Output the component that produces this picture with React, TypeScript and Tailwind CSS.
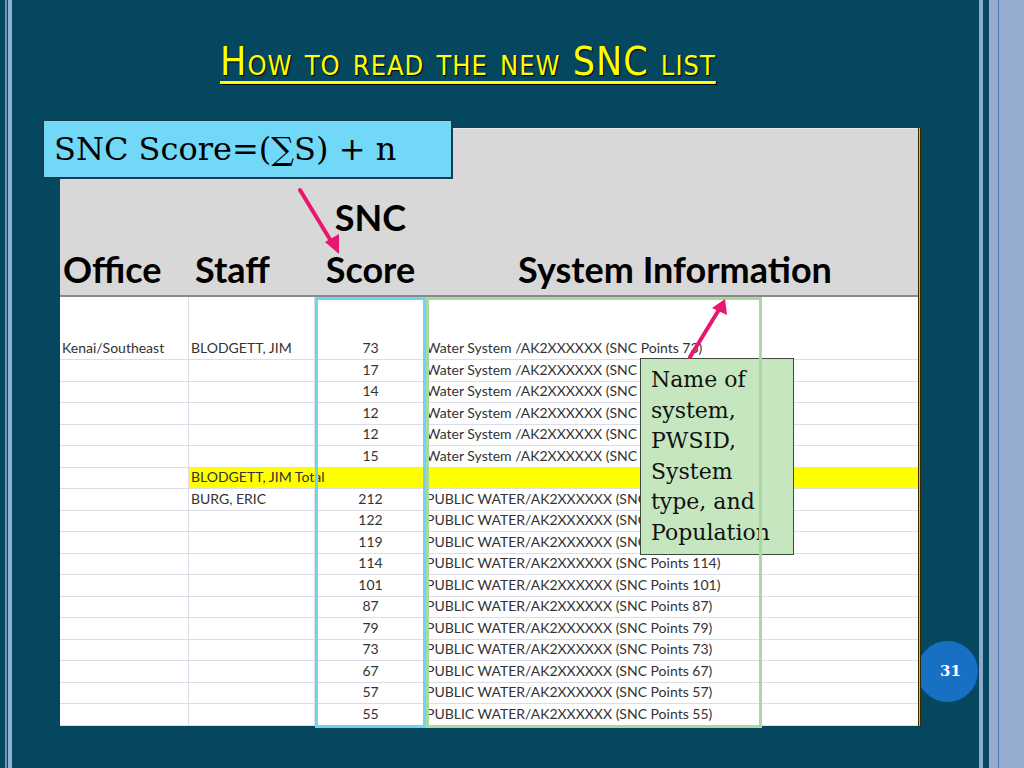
import React from 'react'

type Row = { office?: string; staff?: string; score?: string; info?: string; total?: string }

const rows: Row[] = [
  { score: '17', info: 'Water System /AK2XXXXXX (SNC Points 17)' },
  { score: '14', info: 'Water System /AK2XXXXXX (SNC Points 14)' },
  { score: '12', info: 'Water System /AK2XXXXXX (SNC Points 12)' },
  { score: '12', info: 'Water System /AK2XXXXXX (SNC Points 12)' },
  { score: '15', info: 'Water System /AK2XXXXXX (SNC Points 15)' },
  { total: 'BLODGETT, JIM Total' },
  { staff: 'BURG, ERIC', score: '212', info: 'PUBLIC WATER/AK2XXXXXX (SNC Points 212)' },
  ...['122', '119', '114', '101', '87', '79', '73', '67', '57', '55'].map(s => ({
    score: s,
    info: `PUBLIC WATER/AK2XXXXXX (SNC Points ${s})`,
  })),
]

const cols = 'grid grid-cols-[129px_126px_111px_334px_158px]'
const cell = 'flex items-end pb-[1px] whitespace-nowrap overflow-hidden'

const BodyRow: React.FC<{ row: Row; tall?: boolean }> = ({ row, tall }) => {
  if (row.total) {
    return (
      <div className={`${cols} h-[21.5px] border-b border-[#dcdde8]`}>
        <div className="border-r border-[#dcdde8]" />
        <div className={`${cell} col-span-4 bg-[#ffff00] pl-[2px]`}>{row.total}</div>
      </div>
    )
  }
  return (
    <div className={`${cols} ${tall ? 'h-[63px]' : 'h-[21.5px]'} border-b border-[#dcdde8]`}>
      <div className={`${cell} pl-[2px] border-r border-[#dcdde8]`}>{row.office}</div>
      <div className={`${cell} pl-[2px] border-r border-[#dcdde8]`}>{row.staff}</div>
      <div className={`${cell} justify-center`}>{row.score}</div>
      <div className={`${cell} pl-[0px]`}>{row.info}</div>
      <div />
    </div>
  )
}

export default function App() {
  return (
    <div className="relative w-[1024px] h-[768px] bg-[#04475e] flex overflow-hidden">
      {/* left frame stripes */}
      <div className="w-[5px]" />
      <div className="w-[2px] bg-[#6f94b8]" />
      <div className="w-[1px]" />
      <div className="w-[4px] bg-[#8eb3db]" />

      <div className="flex-1 flex flex-col">
        <div className="pt-[42px] pl-[208px]">
          <h1
            className="inline-block text-[#ffff00] text-[39px] leading-[40px] tracking-[1px] underline decoration-[3px] underline-offset-[6px] [font-variant:small-caps] [text-shadow:1px_1px_1px_#000]"
            style={{ fontFamily: '"DejaVu Sans Condensed", "Open Sans", sans-serif' }}
          >
            How to read the new SNC list
          </h1>
        </div>

        {/* spreadsheet picture */}
        <div className="relative z-[1] mt-[46px] ml-[48px] flex">
          <div className="w-[858px] flex flex-col" style={{ fontFamily: 'Lato, "Open Sans", sans-serif' }}>
            <div
              className={`${cols} h-[169px] bg-[#d8d8d8] border-t border-[#e6eaee] border-b-2 border-b-[#8a8a8a] text-[36px] font-bold text-black leading-none`}
            >
              <div className="flex items-end pl-[3px] pb-[8px]">Office</div>
              <div className="flex items-end pl-[6px] pb-[8px]">Staff</div>
              <div className="flex flex-col items-center justify-end pb-[8px] gap-[16px]">
                <span>SNC</span>
                <span>Score</span>
              </div>
              <div className="col-span-2 flex items-end justify-center pb-[8px] pl-[6px]">System Information</div>
            </div>
            <div className="bg-white text-[14px] text-[#333]">
              <BodyRow tall row={{ office: 'Kenai/Southeast', staff: 'BLODGETT, JIM', score: '73', info: 'Water System /AK2XXXXXX (SNC Points 73)' }} />
              {rows.map((r, i) => (
                <BodyRow key={i} row={r} />
              ))}
            </div>
          </div>
          <div className="w-[3px] bg-[#f2b61c] border-x border-[#3a2a00]" />
        </div>
      </div>

      {/* right frame stripes */}
      <div className="w-[4px] bg-[#8fa9cc]" />
      <div className="w-[6px]" />
      <div className="w-[9px] bg-[#96acce]" />
      <div className="w-[1px] bg-[#4e77b0]" />
      <div className="w-[25px] bg-[#96acce]" />

      {/* page number, partly under the spreadsheet */}
      <div
        className="absolute left-[917px] top-[641px] w-[61px] h-[61px] rounded-full bg-[#1870c4] flex items-center justify-center text-white text-[15px] font-bold"
        style={{ fontFamily: '"DejaVu Serif", serif' }}
      >
        <span className="pl-[6px]">31</span>
      </div>

      {/* column highlight boxes */}
      <div className="absolute left-[315px] top-[297px] w-[111px] h-[431px] border-[3px] border-[#6fd3f2] z-10" />

      {/* callout: system info */}
      <div
        className="absolute left-[640px] top-[358px] w-[154px] h-[197px] bg-[#c5e6bf] border border-[#3d4a3d] pl-[10px] pt-[6px] text-[22px] leading-[30.5px] text-[#111] z-[2]"
        style={{ fontFamily: '"DejaVu Serif", "Liberation Serif", serif' }}
      >
        Name of system, PWSID, System type, and Population
      </div>

      <div className="absolute left-[426px] top-[297px] w-[336px] h-[431px] border-[3px] border-[#a9d9a1] z-10" />

      {/* formula box */}
      <div
        className="absolute left-[42px] top-[119px] w-[411px] h-[60px] bg-[#71d9f7] border-2 border-[#173a4e] pl-[10px] flex items-center text-[32px] text-black z-20"
        style={{ fontFamily: '"DejaVu Serif", "Liberation Serif", serif' }}
      >
        SNC Score=(∑S) + n
      </div>

      {/* arrows */}
      <svg className="absolute left-0 top-0 z-30 pointer-events-none" width="1024" height="768">
        <g stroke="#e8166f" strokeWidth="4" strokeLinecap="round" fill="none">
          <line x1="300" y1="190" x2="334" y2="246" />
          <line x1="690" y1="357" x2="720" y2="308" />
        </g>
        <polygon points="339,254 325,242 339,234" fill="#e8166f" />
        <polygon points="725,299 712,308 727,315" fill="#e8166f" />
      </svg>
    </div>
  )
}
